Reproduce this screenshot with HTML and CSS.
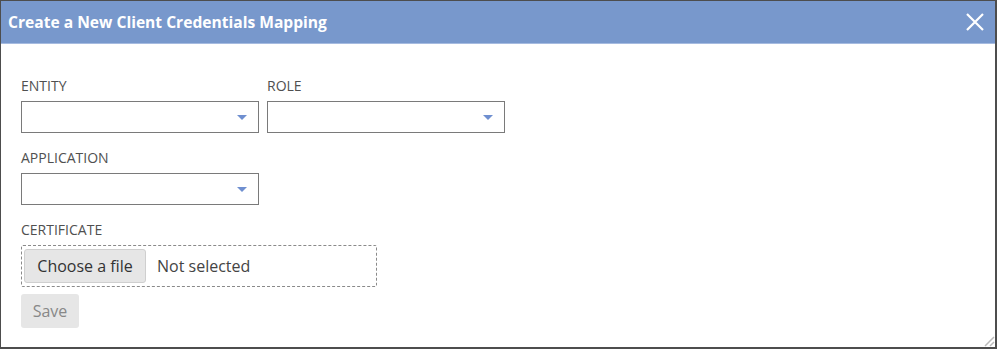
FILE: index.html
```html
<!DOCTYPE html>
<html>
<head>
<meta charset="utf-8">
<link rel="stylesheet" href="styles.css">
</head>
<body>
<div class="dialog">
  <div class="titlebar">
    <span class="title">Create a New Client Credentials Mapping</span>
    <svg class="close" width="20" height="20" viewBox="0 0 20 20"><path d="M2 2 L18 18 M18 2 L2 18" stroke="#fff" stroke-width="2.2" fill="none"/></svg>
  </div>
  <div class="content">
    <div class="row">
      <div class="field">
        <label class="label">ENTITY</label>
        <div class="select"><span class="arrow"></span></div>
      </div>
      <div class="field">
        <label class="label">ROLE</label>
        <div class="select"><span class="arrow"></span></div>
      </div>
    </div>
    <div class="row">
      <div class="field">
        <label class="label">APPLICATION</label>
        <div class="select"><span class="arrow"></span></div>
      </div>
    </div>
    <div class="field field-last">
      <label class="label">CERTIFICATE</label>
      <div class="filebox">
        <span class="filebtn">Choose a file</span>
        <span class="filename">Not selected</span>
      </div>
    </div>
    <div class="actions">
      <span class="save">Save</span>
    </div>
  </div>
  <svg class="grip" width="14" height="14" viewBox="0 0 14 14"><path d="M13 4 L4 13 M13 9 L9 13" stroke="#bbb" stroke-width="1.5" fill="none"/></svg>
</div>
</body>
</html>
```
FILE: styles.css
```css
html, body { margin: 0; padding: 0; background: #fff; }
body { font-family: "Open Sans", "DejaVu Sans", sans-serif; }
.dialog {
  position: relative;
  box-sizing: border-box;
  width: 997px;
  height: 349px;
  border: 1px solid #4d4d4d;
  border-right-width: 2px;
  border-bottom-width: 2px;
  background: #fff;
}
.titlebar {
  height: 42px;
  background: #7898cc;
  border-bottom: 1px solid #a6bbe0;
  display: flex;
  align-items: center;
  justify-content: space-between;
  padding: 0 10px 0 7px;
}
.title {
  color: #fff;
  font-weight: 700;
  font-size: 15.6px;
}
.close { display: block; }
.content {
  padding: 32px 20px 0 20px;
}
.row { display: flex; gap: 8px; }
.field { display: flex; flex-direction: column; margin-bottom: 15px; }
.field-last { margin-bottom: 7px; }
.label {
  font-size: 14px;
  line-height: 19px;
  color: #505050;
  margin-bottom: 6px;
}
.select {
  position: relative;
  box-sizing: border-box;
  width: 238px;
  height: 32px;
  border: 1px solid #7a7a7a;
  background: #fff;
}
.arrow {
  position: absolute;
  right: 11px;
  top: 13px;
  width: 0; height: 0;
  border-left: 5px solid transparent;
  border-right: 5px solid transparent;
  border-top: 5px solid #6f8fd0;
}
.filebox {
  box-sizing: border-box;
  width: 356px;
  height: 42px;
  border: 1px dashed #8a8a8a;
  border-radius: 2px;
  padding: 3px 2px;
  display: flex;
  align-items: center;
}
.filebtn {
  box-sizing: border-box;
  height: 34px;
  width: 122px;
  background: #e6e6e6;
  border: 1px solid #cfcfcf;
  border-radius: 3px;
  font-size: 16px;
  color: #333;
  display: flex;
  align-items: center;
  justify-content: center;
}
.filename {
  font-size: 16px;
  color: #444;
  margin-left: 11px;
}
.actions { display: flex; }
.save {
  box-sizing: border-box;
  height: 34px;
  width: 58px;
  background: #e6e6e6;
  border-radius: 3px;
  font-size: 16px;
  color: #888;
  display: flex;
  align-items: center;
  justify-content: center;
}
.grip {
  position: absolute;
  right: 0;
  bottom: 0;
}
```
